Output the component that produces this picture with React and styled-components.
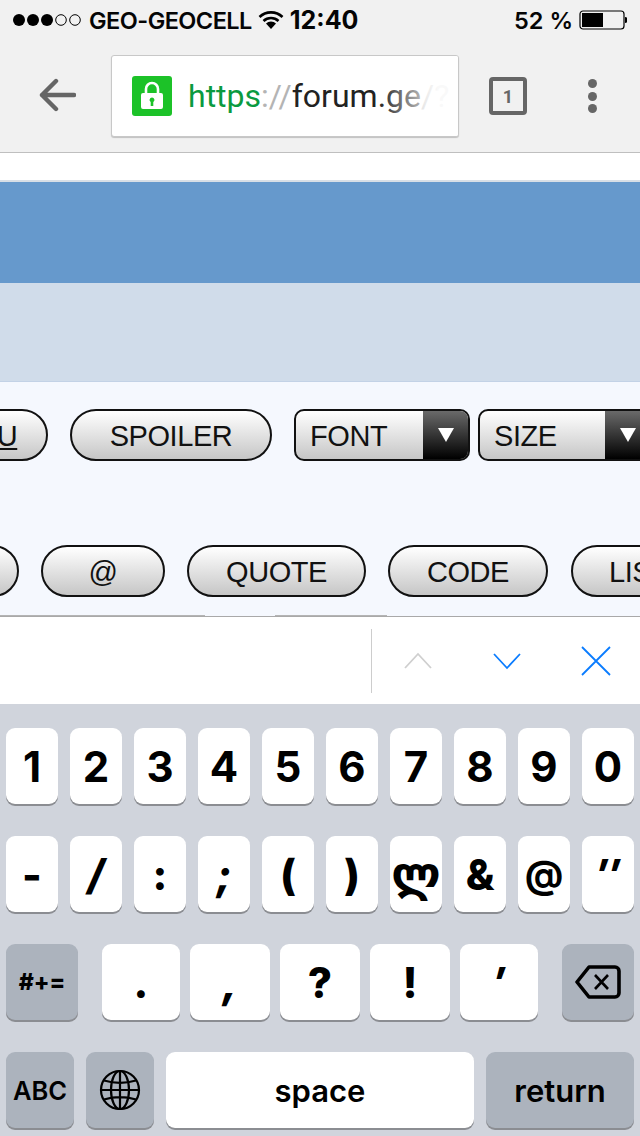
import React from "react";
import styled, { createGlobalStyle } from "styled-components";

const Global = createGlobalStyle`
  html, body { margin: 0; padding: 0; background: #fff; }
  #root { width: 640px; height: 1136px; overflow: hidden; }
  * { box-sizing: border-box; }
`;

const Page = styled.div`
  width: 640px; height: 1136px; display: flex; flex-direction: column; overflow: hidden;
`;

const StatusBar = styled.div`
  height: 40px; background: #f1f1f1; display: flex; align-items: center; padding: 0 13px 0 13px;
  font-family: Inter, "Liberation Sans", sans-serif; font-size: 23.5px; color: #050505; font-weight: 600;
`;
const Carrier = styled.span` margin-left: 8px; letter-spacing: -0.55px; `;
const Clock = styled.span` margin-left: 6px; font-weight: 700; font-size: 25px; `;
const Percent = styled.span` margin-left: auto; margin-right: 6px; font-weight: 600; font-size: 23.5px; `;

const Toolbar = styled.div`
  height: 113px; background: #f1f1f1; border-bottom: 1px solid #bfbfbf; display: flex; align-items: flex-start;
  padding: 15px 0 0 38px;
`;
const BackIcon = styled.svg` width: 38px; height: 38px; margin-top: 21px; `;
const UrlBox = styled.div`
  position: relative; width: 348px; height: 82px; margin-left: 35px; background: #fff; border: 1px solid #c8c8c8;
  border-radius: 3px; box-shadow: 0 1px 1px rgba(0,0,0,.2); display: flex; align-items: center; padding-left: 20px;
  font-family: Roboto, "Liberation Sans", sans-serif; font-size: 32px; overflow: hidden; white-space: nowrap;
  &::after {
    content: ""; position: absolute; right: 0; top: 0; bottom: 0; width: 80px;
    background: linear-gradient(90deg, rgba(255,255,255,0), rgba(255,255,255,.92) 75%);
  }
`;
const LockBadge = styled.div`
  width: 40px; height: 40px; flex: none; background: #1cc228; border-radius: 3px; display: flex;
  align-items: center; justify-content: center; margin-right: 16px;
`;
const Scheme = styled.span` color: #0a9a40; `;
const Sep = styled.span` color: #b4b4b4; `;
const Host = styled.span` color: #222; `;
const TabCount = styled.div`
  width: 38px; height: 38px; margin: 22px 0 0 30px; border: 4px solid #666; border-radius: 4px; display: flex;
  align-items: center; justify-content: center; font: 700 18px Roboto, sans-serif; color: #666;
`;
const MenuDots = styled.div`
  margin: 24px 0 0 61px; display: flex; flex-direction: column; gap: 3.5px;
  i { display: block; width: 9px; height: 9px; border-radius: 50%; background: #666; }
`;

const WhiteStrip = styled.div` height: 29px; background: #fff; border-bottom: 2px solid #d8dfe6; `;
const BlueBand = styled.div` height: 101px; background: #6699cc; `;
const PaleBand = styled.div` height: 99px; background: #d0dcea; border-bottom: 1px solid #c3d2e6; `;

const Panel = styled.div`
  position: relative; height: 235px; background: #f5f8fe; border-bottom: 1px solid #a9a9a9; padding-top: 27px;
  display: flex; flex-direction: column; gap: 84px; overflow: hidden;
  &::after {
    content: ""; position: absolute; left: 0; right: 0; bottom: 0; height: 1px;
    background: linear-gradient(90deg, #b4b4b4 0 205px, transparent 205px 275px, #b4b4b4 275px 387px, transparent 387px);
  }
`;
const BtnRow = styled.div` display: flex; height: 52px; margin-left: ${p => p.$offset}px; flex: none; `;
const Pill = styled.div`
  flex: none; width: ${p => p.$w}px; height: 52px; margin-right: ${p => p.$gap}px; border: 2px solid #111; border-radius: 26px;
  background: linear-gradient(#fff, #c6c6c6); display: flex; align-items: center; justify-content: center; padding-top: 3px;
  font: 29px "Liberation Sans", Arial, sans-serif; letter-spacing: -0.43px; color: #111;
  text-decoration: ${p => (p.$underline ? "underline" : "none")};
`;
const PillLeft = styled(Pill)` justify-content: flex-start; padding-left: ${p => p.$pad}px; `;
const Select = styled.div`
  flex: none; width: ${p => p.$w}px; height: 52px; margin-right: ${p => p.$gap}px; border: 2px solid #111; border-radius: 10px;
  overflow: hidden; display: flex; background: linear-gradient(#fff, #c6c6c6);
  font: 29px "Liberation Sans", Arial, sans-serif; letter-spacing: -0.43px; color: #111;
`;
const SelectLabel = styled.div` flex: 1; display: flex; align-items: center; padding: 3px 0 0 14px; `;
const SelectArrow = styled.div`
  width: 45px; flex: none; background: linear-gradient(#6a6a6a, #000); display: flex; align-items: center; justify-content: center;
`;

const FindBar = styled.div`
  height: 87px; background: #fff; display: flex; align-items: center; justify-content: flex-start; padding-left: 371px;
`;
const Divider = styled.div` width: 1px; height: 64px; background: #cdcdcd; `;
const Chevron = styled.svg` width: 30px; height: 30px; margin-left: ${p => p.$ml}px; flex: none; `;

const Keyboard = styled.div`
  flex: 1; background: #d0d4dc; padding: 24px 6px 0; display: flex; flex-direction: column; gap: 32px;
`;
const KeyRow = styled.div` display: flex; gap: ${p => p.$gap || 12}px; height: 76px; `;
const Key = styled.div`
  flex: none; width: ${p => p.$w}px; height: 76px; margin-left: ${p => p.$ml || 0}px;
  background: ${p => (p.$dark ? "#acb3bd" : "#fff")}; border-radius: 9px; box-shadow: 0 2px 0 #8b8d92;
  display: flex; align-items: center; justify-content: center; color: #000;
  font-family: ${p => p.$font || 'Inter, "Liberation Sans", sans-serif'}; font-weight: ${p => p.$weight || 700};
  font-style: ${p => (p.$slant ? "italic" : "normal")};
  font-size: ${p => p.$size || 42}px;
`;

const digits = ["1","2","3","4","5","6","7","8","9","0"];
const symbols = [
  { c: "-", weight: 800 }, { c: "/", weight: 800, slant: true }, { c: ":", weight: 800 }, { c: ";", weight: 800, slant: true },
  { c: "(", weight: 800 }, { c: ")", weight: 800 }, { c: "ლ", size: 46, font: '"DejaVu Sans", sans-serif' },
  { c: "&", weight: 800 }, { c: "@", size: 38 }, { c: "″", weight: 800, slant: true },
];
const punct = [
  { c: ".", w: 78, first: true }, { c: ",", w: 80, slant: true }, { c: "?", w: 80 }, { c: "!", w: 80 }, { c: "′", w: 78, slant: true },
];

export default function App() {
  return (
    <Page>
      <Global />
      <StatusBar>
        <svg width="68" height="14" viewBox="0 0 68 14">
          <circle cx="6" cy="7" r="6" fill="#000"/><circle cx="20" cy="7" r="6" fill="#000"/><circle cx="34" cy="7" r="6" fill="#000"/>
          <circle cx="48" cy="7" r="5.3" fill="none" stroke="#000"/><circle cx="62" cy="7" r="5.3" fill="none" stroke="#000"/>
        </svg>
        <Carrier>GEO-GEOCELL</Carrier>
        <svg width="26" height="20" viewBox="0 0 26 20" style={{marginLeft: 6}}>
          <path d="M1.5 7a16.5 16.5 0 0 1 23 0M5.5 11a11 11 0 0 1 15 0" fill="none" stroke="#000" strokeWidth="2.6"/>
          <path d="M8 13.500a7 7 0 0 1 10 0L13 19z" fill="#000"/>
        </svg>
        <Clock>12:40</Clock>
        <Percent>52 %</Percent>
        <svg width="48" height="20" viewBox="0 0 48 20">
          <rect x="1" y="1" width="44" height="18" rx="3" fill="none" stroke="#000" strokeWidth="1.2"/>
          <rect x="3" y="3" width="21" height="14" fill="#000"/>
          <path d="M46 7c2 0 2.500 1 2.500 3s-.5 3-2.500 3z" fill="#000"/>
        </svg>
      </StatusBar>
      <Toolbar>
        <BackIcon viewBox="0 0 38 38">
          <path d="M36 19H4M18 5L4 19l14 14" fill="none" stroke="#666" strokeWidth="4.4" strokeLinecap="round" strokeLinejoin="round"/>
        </BackIcon>
        <UrlBox>
          <LockBadge>
            <svg width="22" height="30" viewBox="0 0 22 30">
              <path d="M5 13V8a6 6 0 0 1 12 0v5" fill="none" stroke="#fff" strokeWidth="2.6"/>
              <path fillRule="evenodd" d="M2 12h18a2 2 0 0 1 2 2v12a2 2 0 0 1-2 2H2a2 2 0 0 1-2-2V14a2 2 0 0 1 2-2zM11 16.500a2.500 2.500 0 0 0-1.300 4.600V25h2.600v-3.900A2.500 2.500 0 0 0 11 16.500z" fill="#fff"/>
            </svg>
          </LockBadge>
          <Scheme>https</Scheme><Sep>://</Sep><Host>forum.ge</Host><Sep>/?</Sep>
        </UrlBox>
        <TabCount>1</TabCount>
        <MenuDots><i/><i/><i/></MenuDots>
      </Toolbar>
      <WhiteStrip />
      <BlueBand />
      <PaleBand />
      <Panel>
        <BtnRow $offset={-34}>
          <Pill $w={82} $gap={22} $underline>U</Pill>
          <Pill $w={202} $gap={22}>SPOILER</Pill>
          <Select $w={176} $gap={8}>
            <SelectLabel>FONT</SelectLabel>
            <SelectArrow><svg width="16" height="14" viewBox="0 0 16 14"><path d="M0 0h16L8 14z" fill="#fff"/></svg></SelectArrow>
          </Select>
          <Select $w={174} $gap={0}>
            <SelectLabel>SIZE</SelectLabel>
            <SelectArrow><svg width="16" height="14" viewBox="0 0 16 14"><path d="M0 0h16L8 14z" fill="#fff"/></svg></SelectArrow>
          </Select>
        </BtnRow>
        <BtnRow $offset={-60}>
          <Pill $w={79} $gap={22} />
          <Pill $w={124} $gap={22}>@</Pill>
          <Pill $w={179} $gap={22}>QUOTE</Pill>
          <Pill $w={160} $gap={23}>CODE</Pill>
          <PillLeft $w={120} $gap={0} $pad={36}>LIST</PillLeft>
        </BtnRow>
      </Panel>
      <FindBar>
        <Divider />
        <Chevron $ml={31} viewBox="0 0 30 30"><path d="M2 22L15 8l13 14" fill="none" stroke="#cfcfcf" strokeWidth="1.800"/></Chevron>
        <Chevron $ml={59} viewBox="0 0 30 30"><path d="M2 8l13 14L28 8" fill="none" stroke="#0a7cff" strokeWidth="1.800"/></Chevron>
        <Chevron $ml={59} viewBox="0 0 30 30"><path d="M1 1l28 28M29 1L1 29" fill="none" stroke="#0a7cff" strokeWidth="1.800"/></Chevron>
      </FindBar>
      <Keyboard>
        <KeyRow>
          {digits.map(d => <Key key={d} $w={52}>{d}</Key>)}
        </KeyRow>
        <KeyRow>
          {symbols.map(s => <Key key={s.c} $w={52} $size={s.size} $font={s.font} $weight={s.weight} $slant={s.slant}>{s.c}</Key>)}
        </KeyRow>
        <KeyRow $gap={10}>
          <Key $w={72} $dark $size={23} $weight={800}>#+=</Key>
          {punct.map(p => <Key key={p.c} $w={p.w} $ml={p.first ? 14 : 0} $weight={800} $slant={p.slant}>{p.c}</Key>)}
          <Key $w={72} $dark $ml={14}>
            <svg width="46" height="34" viewBox="0 0 46 34">
              <path d="M14 2h26a4 4 0 0 1 4 4v22a4 4 0 0 1-4 4H14L2 17z" fill="none" stroke="#000" strokeWidth="3.600" strokeLinejoin="round"/>
              <path d="M20 10l13 14M33 10L20 24" stroke="#000" strokeWidth="2.600"/>
            </svg>
          </Key>
        </KeyRow>
        <KeyRow>
          <Key $w={68} $dark $size={25.5} $weight={600}>ABC</Key>
          <Key $w={68} $dark>
            <svg width="42" height="42" viewBox="0 0 42 42" fill="none" stroke="#000" strokeWidth="2.200">
              <circle cx="21" cy="21" r="19"/><ellipse cx="21" cy="21" rx="9" ry="19"/>
              <path d="M21 2v38M2 21h38M5 11.500c10 3 22 3 32 0M5 30.500c10-3 22-3 32 0"/>
            </svg>
          </Key>
          <Key $w={308} $size={31} $weight={600}>space</Key>
          <Key $w={148} $dark $size={31} $weight={600}>return</Key>
        </KeyRow>
      </Keyboard>
    </Page>
  );
}
